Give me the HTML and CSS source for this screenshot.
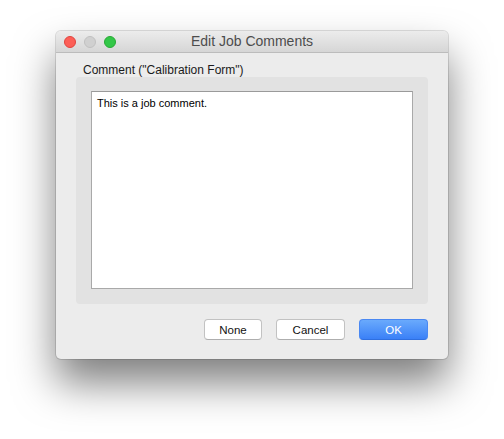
FILE: index.html
```html
<!DOCTYPE html>
<html>
<head>
<meta charset="utf-8">
<link rel="stylesheet" href="styles.css">
</head>
<body>
<div class="window">
  <div class="titlebar">
    <div class="lights">
      <span class="light red"></span>
      <span class="light gray"></span>
      <span class="light green"></span>
    </div>
    <div class="title">Edit Job Comments</div>
  </div>
  <div class="content">
    <div class="label">Comment ("Calibration Form")</div>
    <div class="box">
      <div class="textarea">This is a job comment.</div>
    </div>
    <div class="buttons">
      <button class="btn">None</button>
      <button class="btn">Cancel</button>
      <button class="btn primary">OK</button>
    </div>
  </div>
</div>
</body>
</html>
```
FILE: styles.css
```css
html, body {
  margin: 0;
  padding: 0;
  background: #ffffff;
}
html {
  height: 439px;
  overflow: hidden;
}
body {
  font-family: "Liberation Sans", Arial, sans-serif;
  padding: 31px 0 0 56px;
  height: 439px;
  box-sizing: border-box;
}
.window {
  width: 392px;
  height: 328px;
  background: #ececec;
  border-radius: 5px;
  box-shadow: 0 24px 42px rgba(0,0,0,0.5), 0 0 0 1px rgba(0,0,0,0.12);
  overflow: hidden;
  display: flex;
  flex-direction: column;
}
.titlebar {
  height: 21px;
  position: relative;
  background: linear-gradient(#ececec, #d6d6d6);
  border-bottom: 1px solid #bcbcbc;
  display: flex;
  align-items: center;
  justify-content: center;
}
.lights {
  position: absolute;
  left: 8px;
  top: 5px;
  display: flex;
  gap: 8px;
}
.light {
  width: 12px;
  height: 12px;
  box-sizing: border-box;
  border-radius: 50%;
  display: block;
}
.red { background: #fc5f57; border: 1px solid #e0443e; }
.gray { background: #d0d0d0; border: 1px solid #c0c0c0; }
.green { background: #33c748; border: 1px solid #28a934; }
.title {
  font-size: 14px;
  color: #4d4d4d;
  line-height: 21px;
}
.content {
  padding: 10px 20px 0 20px;
  display: flex;
  flex-direction: column;
}
.label {
  font-size: 12px;
  line-height: 14px;
  color: #1a1a1a;
  margin-left: 7px;
}
.box {
  height: 227px;
  box-sizing: border-box;
  background: #e2e2e2;
  border-radius: 4px;
  padding: 14px 15px 15px 15px;
}
.textarea {
  height: 100%;
  box-sizing: border-box;
  background: #ffffff;
  border: 1px solid #a9a9a9;
  border-top-color: #9a9a9a;
  font-size: 11px;
  color: #000;
  padding: 5px 5px;
  line-height: 13px;
}
.buttons {
  display: flex;
  justify-content: flex-end;
  gap: 14px;
  margin-top: 15px;
}
.btn {
  height: 21px;
  box-sizing: border-box;
  font-family: "Liberation Sans", Arial, sans-serif;
  font-size: 11.5px;
  color: #111;
  background: #ffffff;
  border: 1px solid #c2c2c2;
  border-bottom-color: #aeaeae;
  border-radius: 4px;
  padding: 0;
  width: 58px;
}
.btn:nth-child(2) { width: 69px; }
.btn.primary {
  width: 69px;
  color: #ffffff;
  background: linear-gradient(#6aaafc, #3a80f7);
  border: 1px solid #4a88f2;
  border-bottom-color: #2f6fe0;
}
```
